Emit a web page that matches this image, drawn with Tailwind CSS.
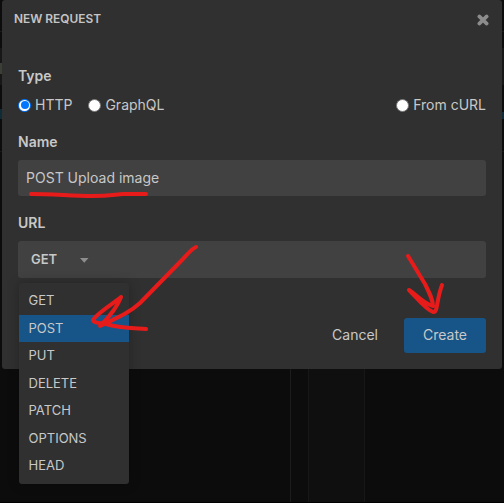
<!DOCTYPE html>
<html lang="en">
<head>
<meta charset="utf-8">
<title>New Request</title>
<script src="https://cdn.jsdelivr.net/npm/@tailwindcss/browser@4"></script>
</head>
<body class="relative h-[503px] w-[504px] overflow-hidden bg-[#0c0c0c] font-['Inter',sans-serif] text-sm text-[#c8c8c8]">
<!-- Dimmed application behind the dialog -->
<div class="absolute inset-0 flex flex-col">
  <div class="h-8 border-b border-[#1b1b1b]"></div>
  <div class="h-4"></div>
  <div class="h-[37px] bg-[#171717]"></div>
  <div class="h-[67px] border-b border-[#181818]"></div>
  <div class="flex flex-1 border-b border-black">
    <div class="w-[291px] border-r border-[#1c1c1c]"></div>
    <div class="w-[17px]"></div>
    <div class="w-[57px] border-x border-[#171717] bg-[#0f0f0f]"></div>
  </div>
</div>
<div class="absolute top-[63px] left-0 h-[11px] w-[2px] bg-[#3c3f35]"></div>
<div class="absolute top-[109px] left-0 h-[10px] w-[2px] bg-[#0d2c38]"></div>
<div class="absolute top-[112px] left-[502px] h-[7px] w-[2px] bg-[#122b38]"></div>

<main class="relative ml-[2px] flex h-[369px] w-[500px] flex-col rounded-[3px] bg-[#303030]">
  <header class="flex h-[38px] items-center justify-between pr-[13px] pl-3">
    <h1 class="pb-[2px] text-[11.9px] font-semibold text-[#c4c4c4]">NEW REQUEST</h1>
    <button aria-label="Close"><svg class="mt-px block" width="12" height="12" viewBox="0 0 12 12" fill="none" stroke="#8c8c8c" stroke-width="3.6" stroke-linecap="round"><path d="M2.3 2.4 9.7 9.6M9.7 2.4 2.3 9.6"/></svg></button>
  </header>
  <form class="flex flex-col px-4 pt-[28px]">
    <h2 class="h-5 leading-5 font-semibold">Type</h2>
    <div class="mt-2 flex h-[22px] items-center leading-5">
      <label class="flex items-center gap-[4px]"><span class="flex size-[13px] items-center justify-center rounded-full bg-[#0075ff]"><span class="flex size-[11px] items-center justify-center rounded-full bg-white"><span class="size-[8px] rounded-full bg-[#0075ff]"></span></span></span>HTTP</label>
      <label class="ml-4 flex items-center gap-[4px]"><span class="size-[13px] rounded-full border border-[#767676] bg-white"></span>GraphQL</label>
      <label class="ml-auto flex items-center gap-[4px]"><span class="size-[13px] rounded-full border border-[#767676] bg-white"></span>From cURL</label>
    </div>
    <h2 class="mt-4 h-5 leading-5 font-semibold">Name</h2>
    <div class="mt-2 flex h-9 items-center rounded-[3px] bg-[#414141] px-2">POST Upload image</div>
    <h2 class="mt-[17px] h-5 leading-5 font-semibold">URL</h2>
    <div class="mt-2 flex h-[37px] items-center rounded-[3px] bg-[#414141] pl-[13px]">
      <span class="w-[49px] text-[13px] font-semibold">GET</span>
      <svg class="mt-[2px]" width="9" height="5" viewBox="0 0 9 5"><path d="M0 0h8.5L4.25 4.8Z" fill="#8e8e8e"/></svg>
    </div>
    <div class="mt-10 flex h-[35px] items-center justify-end">
      <button class="mr-[26px] pb-[2px]">Cancel</button>
      <button class="h-full w-[82px] rounded-[3px] bg-[#175487] pb-[2px]">Create</button>
    </div>
  </form>
</main>

<ul class="absolute top-[283px] left-[19px] h-[201px] w-[110px] rounded-[3px] bg-[#303030] pt-1 text-[13px] leading-[26px] shadow-[0_0_12px_rgba(0,0,0,0.25)]">
  <li class="h-[28px] pl-[9.5px]">GET</li>
  <li class="h-[27px] bg-[#175487] pl-[9.5px]">POST</li>
  <li class="h-[28px] pl-[9.5px]">PUT</li>
  <li class="h-[27px] pl-[9.5px]">DELETE</li>
  <li class="h-[28px] pl-[9.5px]">PATCH</li>
  <li class="h-[27px] pl-[9.5px]">OPTIONS</li>
  <li class="h-[28px] pl-[9.5px]">HEAD</li>
</ul>

<!-- Hand-drawn annotations -->
<svg class="pointer-events-none absolute inset-0" width="504" height="503" viewBox="0 0 504 503" fill="none" stroke="#e81b1b" stroke-width="4" stroke-linecap="round" stroke-linejoin="round">
  <path d="M31 194C53 194 72 196 92 196S116 194 124 194H146"/>
  <path d="M196 247C191 249 187 255 180 262L140 303C129 313 119 317 100 326C106 320 117 308 121 297C114 303 96 314 93 320C93 323 101 323 106 324C118 328 132 328 146 329"/>
  <path d="M408 256L425 284C430 294 433 300 433 306C425 304 419 297 409 290C416 297 425 309 433 312C438 313 436 301 442 285"/>
</svg>
</body>
</html>
